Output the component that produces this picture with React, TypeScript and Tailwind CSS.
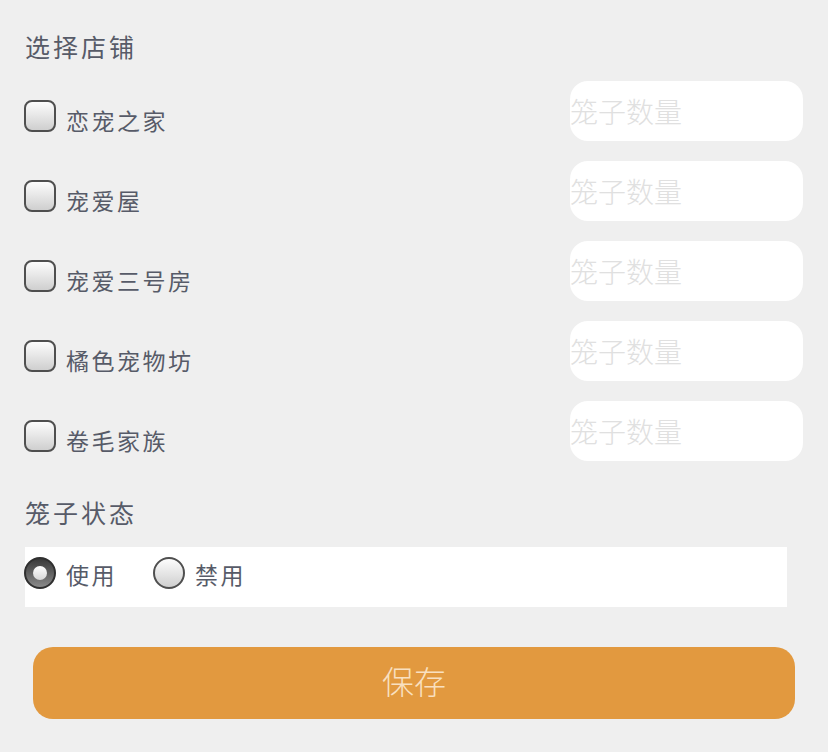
import { useState } from "react";

const shops = ["恋宠之家", "宠爱屋", "宠爱三号房", "橘色宠物坊", "卷毛家族"] as const;

const font = { fontFamily: '"Noto Sans CJK SC", "Noto Sans", sans-serif' };

function Checkbox({ checked, onClick }: { checked: boolean; onClick: () => void }) {
  return (
    <button
      type="button"
      onClick={onClick}
      className="flex h-[32px] w-[32px] shrink-0 items-center justify-center rounded-[8px] border-2 border-[#4f4f4f] bg-gradient-to-b from-[#fdfdfd] to-[#cfcfcf]"
    >
      {checked && <span className="text-[18px] leading-none text-[#333]">✓</span>}
    </button>
  );
}

function Radio({ checked }: { checked: boolean }) {
  if (checked) {
    return (
      <span className="-mt-[8px] flex h-[32px] w-[32px] shrink-0 items-center justify-center rounded-full border-2 border-[#2f2f2f] bg-gradient-to-b from-[#3a3a3a] to-[#8a8a8a]">
        <span className="h-[14px] w-[14px] rounded-full bg-gradient-to-b from-[#ffffff] to-[#d6d6d6]" />
      </span>
    );
  }
  return (
    <span className="-mt-[8px] h-[32px] w-[32px] shrink-0 rounded-full border-2 border-[#4f4f4f] bg-gradient-to-b from-[#fdfdfd] to-[#cfcfcf]" />
  );
}

export default function App() {
  const [picked, setPicked] = useState<string[]>([]);
  const [status, setStatus] = useState<"use" | "off">("use");

  const toggle = (name: string) =>
    setPicked((p) => (p.includes(name) ? p.filter((n) => n !== name) : [...p, name]));

  return (
    <div className="min-h-[752px] bg-[#efefef] pl-[24px] pr-[25px] pt-[28px]" style={font}>
      <h2 className="pl-[1px] text-[25px] leading-[36px] tracking-[3px] text-[#575b68]">选择店铺</h2>

      <div className="mt-[17px] flex flex-col gap-[20px]">
        {shops.map((shop) => (
          <div key={shop} className="flex h-[60px] items-start">
            <div className="flex items-center pt-[15px]">
              <Checkbox checked={picked.includes(shop)} onClick={() => toggle(shop)} />
              <span className="ml-[10px] pt-[8px] text-[23px] leading-[32px] tracking-[2.5px] text-[#575b68]">
                {shop}
              </span>
            </div>
            <input
              placeholder="笼子数量"
              className="ml-auto h-[60px] w-[233px] rounded-[18px] bg-white p-0 text-[28px] font-extralight text-[#555] outline-none placeholder:text-[#e0e0e0]"
            />
          </div>
        ))}
      </div>

      <h2 className="mt-[33px] pl-[1px] text-[25px] leading-[36px] tracking-[3px] text-[#575b68]">笼子状态</h2>

      <div className="ml-[1px] mt-[17px] flex h-[60px] w-[762px] items-center bg-white">
        <label className="-ml-[1px] flex cursor-pointer items-center" onClick={() => setStatus("use")}>
          <Radio checked={status === "use"} />
          <span className="-mt-[6px] ml-[10px] text-[23px] leading-[32px] tracking-[2.5px] text-[#575b68]">使用</span>
        </label>
        <label className="ml-[36px] flex cursor-pointer items-center" onClick={() => setStatus("off")}>
          <Radio checked={status === "off"} />
          <span className="-mt-[6px] ml-[10px] text-[23px] leading-[32px] tracking-[2.5px] text-[#575b68]">禁用</span>
        </label>
      </div>

      <button
        type="button"
        className="ml-[9px] mt-[40px] flex h-[72px] w-[762px] items-center justify-center rounded-[20px] bg-[#e2993f] pb-[6px] text-[32px] font-extralight text-[#f9e0c0]"
      >
        保存
      </button>
    </div>
  );
}
